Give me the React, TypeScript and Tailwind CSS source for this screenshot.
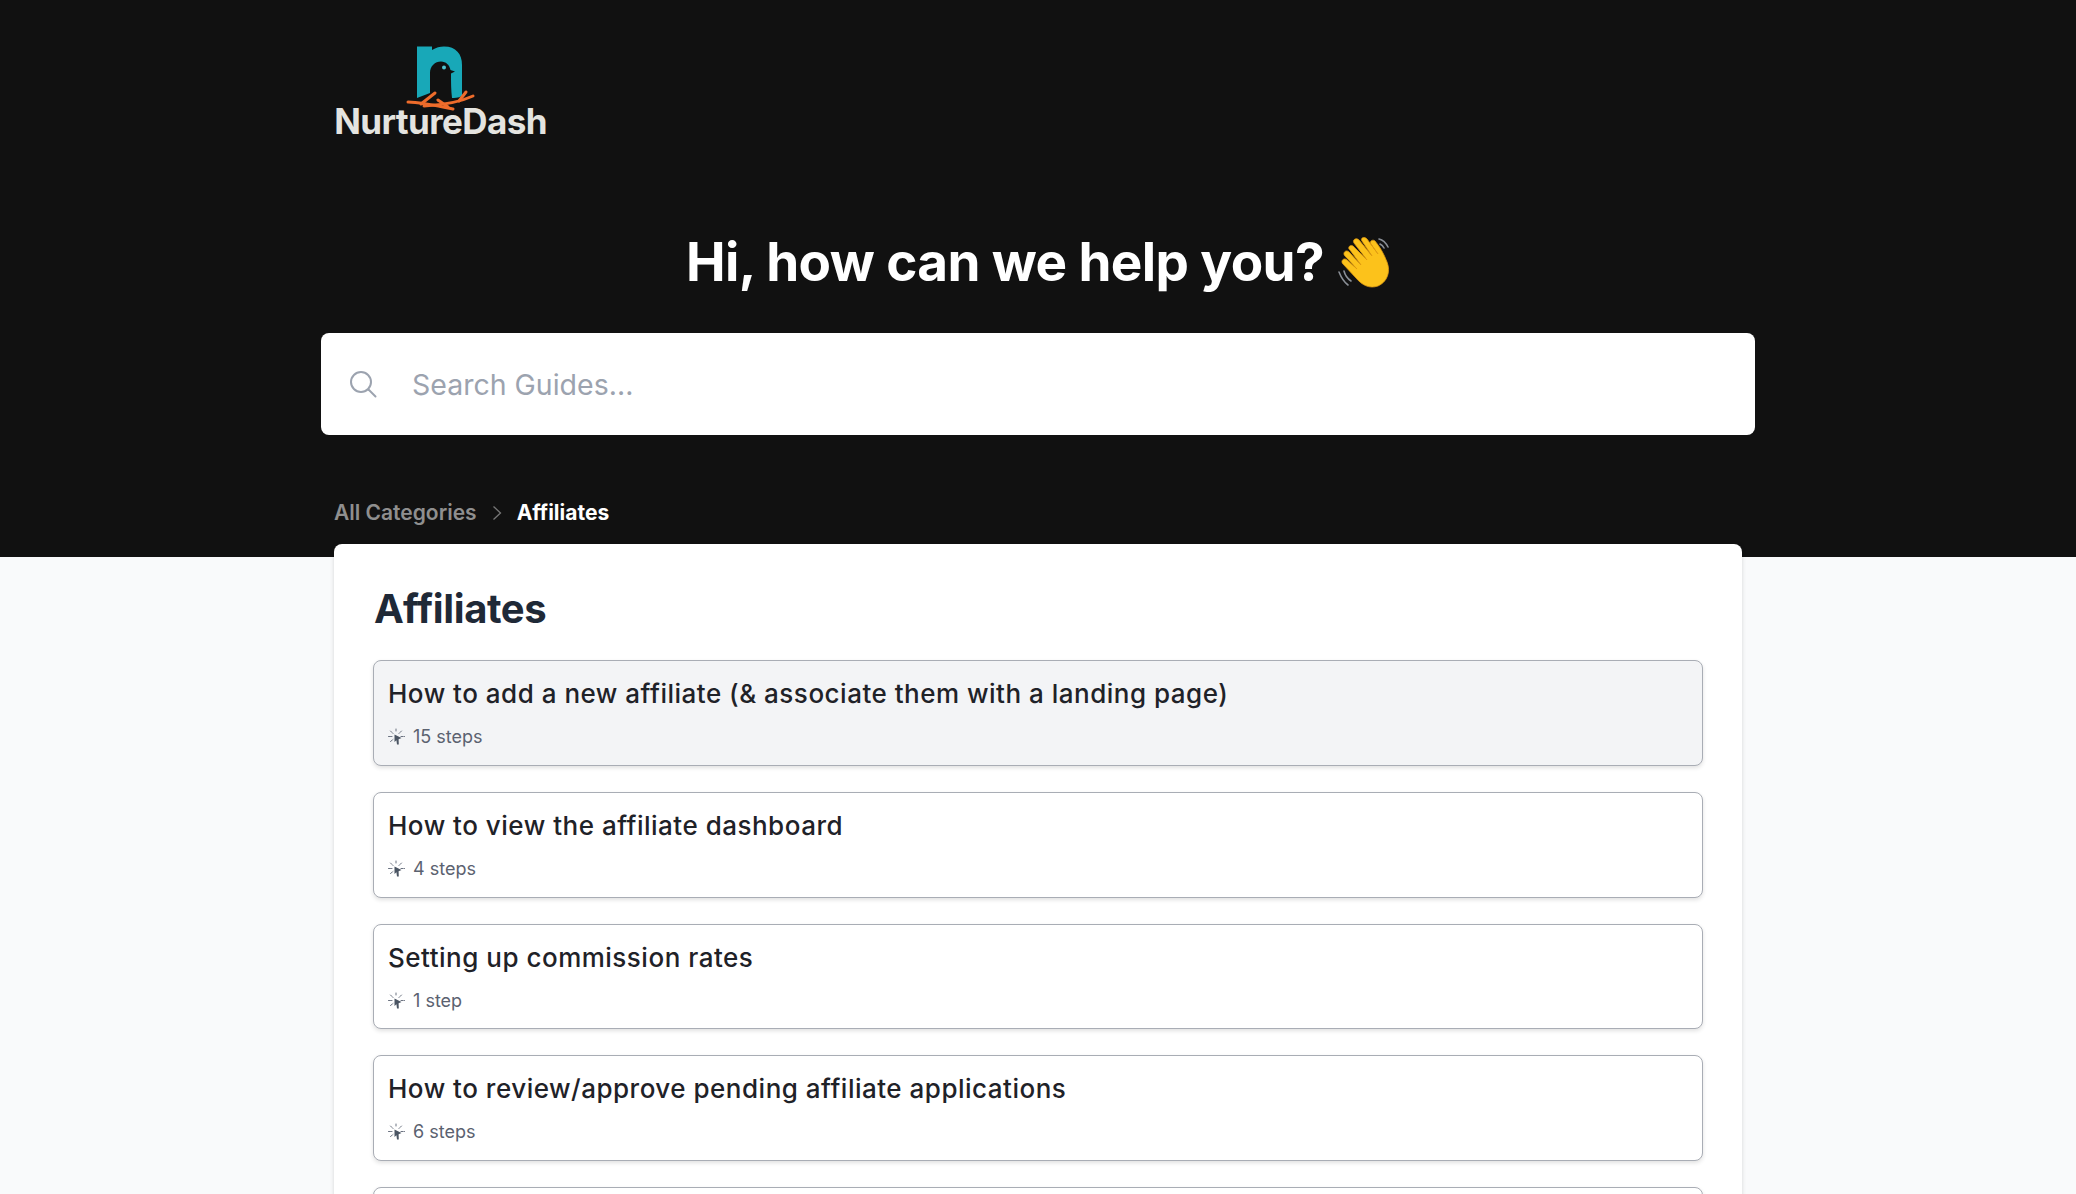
import React from "react";

const font = { fontFamily: "Inter, 'Liberation Sans', sans-serif" };

function Logo() {
  return (
    <div className="flex w-[213px] flex-col items-center">
      <svg width="70" height="66" viewBox="0 0 70 66" className="block">
        <path d="M11 0.5H26V4C30 1.5 34 0.5 38 0.5C50 0.5 56 8 56 19V50C52 52 48 52 46 52C45 44 45 36 45 27.5L49 25.5L44.5 24C43.5 19 40 15.5 35 15.5C29 15.5 24 20 24 27V47L11 52Z" fill="#18a8b8" />
        <circle cx="38" cy="21.5" r="2" fill="#4fc3d0" />
        <g stroke="#ee6c2b" strokeWidth="3" strokeLinecap="round" fill="none">
          <path d="M2 56C14 56 28 59 47 63" />
          <path d="M67 50C54 56 40 59 18 60" />
          <path d="M29 47L15 58" />
          <path d="M60 46L53 55" />
          <path d="M32 54L42 61" />
        </g>
      </svg>
      <span className="mt-[-7px] text-[35px] leading-[32px] font-bold tracking-[-0.6px] text-[#e4e4e0]">NurtureDash</span>
    </div>
  );
}

function Wave() {
  return (
    <svg width="56" height="52" viewBox="0 0 56 52" className="ml-[12.5px] shrink-0">
      <path d="M13 13C10 11 13 7 16 9L30 23L17 6C15 3 19 0 22 3L35 19L25 4C23 1 27-1 30 2L41 17L34 7C32 4 36 2 38 4C43 10 47 17 50 25C54 35 50 45 41 49C32 52 25 48 19 41L6 27C3 24 7 20 10 23L20 32L8 19C5 16 9 12 12 15L24 28Z" fill="#fcc21b" stroke="#e09a12" strokeWidth="0.8" strokeLinejoin="round" />
      <g stroke="#8a8f96" strokeWidth="1.6" fill="none" strokeLinecap="round">
        <path d="M2 35C4 40 7 45 11 48" />
        <path d="M7 34C8 38 11 42 14 44" />
        <path d="M42 2C46 3 49 6 51 10" />
        <path d="M43 7C45 8 46 9 47 11" />
      </g>
    </svg>
  );
}

function ClickIcon() {
  return (
    <svg width="18" height="18" viewBox="0 0 18 18" className="shrink-0">
      <g stroke="#6b7280" strokeWidth="1" strokeLinecap="round" strokeDasharray="2 1">
        <path d="M8 1V4" />
        <path d="M2.5 3L5 5.5" />
        <path d="M13.5 3L11 5.5" />
        <path d="M0.5 8.5H4" />
        <path d="M13 8.5H16.5" />
        <path d="M2.5 13.5L5 11.5" />
      </g>
      <path d="M6.5 6.5L13.5 10L10.6 11.2L10.8 16.5L9 16.5L8.4 12.2L6.5 14Z" fill="#4b5563" />
    </svg>
  );
}

function Guide({ title, steps, active }: { title: string; steps: string; active?: boolean }) {
  return (
    <div
      className={`flex h-[105.75px] flex-col rounded-lg border border-[#a9adb5] px-[14px] pt-[16px] shadow-[0_2px_4px_rgba(0,0,0,0.12)] ${
        active ? "bg-[#f3f4f6]" : "bg-white"
      }`}
    >
      <div className="h-[34px] text-[26px] leading-[34px] font-medium tracking-[0.5px] text-[#1f2228]">{title}</div>
      <div className="mt-[13px] flex items-center gap-[7px] text-[18px] leading-[26px] text-[#5b6270]">
        <ClickIcon />
        <span>{steps}</span>
      </div>
    </div>
  );
}

export default function App() {
  return (
    <div className="h-screen overflow-hidden bg-[#f9fafb]" style={font}>
      <header className="h-[557px] bg-[#111111]">
        <div className="mx-auto w-[1434px]">
          <div className="pt-[46px] pl-[13px]">
            <Logo />
          </div>
          <h1 className="mt-[96px] flex h-[60px] items-center justify-center pl-[2.6px] text-[53px] font-bold tracking-[-0.6px] text-white">
            <span>Hi, how can we help you?</span>
            <Wave />
          </h1>
          <div className="mt-[40px] flex h-[102px] items-center rounded-lg bg-white pl-[28px]">
            <svg width="28" height="28" viewBox="0 0 28 28" fill="none" stroke="#9ca3af" strokeWidth="2" strokeLinecap="round">
              <circle cx="12" cy="12" r="10" />
              <path d="M19.5 19.5L26.5 26.5" />
            </svg>
            <span className="ml-[35px] pt-[2px] text-[28.5px] text-[#9ca3af]">Search Guides...</span>
          </div>
          <nav className="mt-[61px] flex h-[34px] items-center pl-[13px] text-[21px] font-semibold">
            <span className="text-[#8f8f8f]">All Categories</span>
            <svg width="10" height="16" viewBox="0 0 10 16" fill="none" stroke="#777777" strokeWidth="1.3" className="mr-[15px] ml-[15px]">
              <path d="M1.5 1.5L8.5 8L1.5 14.5" />
            </svg>
            <span className="font-bold text-white">Affiliates</span>
          </nav>
        </div>
      </header>
      <main className="mx-auto -mt-[13px] w-[1408px] rounded-lg bg-white px-[39px] pt-[37px] shadow-[0_0_4px_rgba(0,0,0,0.15)]">
        <h2 className="h-[59px] pl-[1px] text-[40px] leading-[56px] font-bold tracking-[-0.4px] text-[#1f2937]">Affiliates</h2>
        <div className="mt-[20px] flex flex-col gap-[26px]">
          <Guide active title="How to add a new affiliate (& associate them with a landing page)" steps="15 steps" />
          <Guide title="How to view the affiliate dashboard" steps="4 steps" />
          <Guide title="Setting up commission rates" steps="1 step" />
          <Guide title="How to review/approve pending affiliate applications" steps="6 steps" />
          <Guide title="" steps="" />
        </div>
      </main>
    </div>
  );
}
